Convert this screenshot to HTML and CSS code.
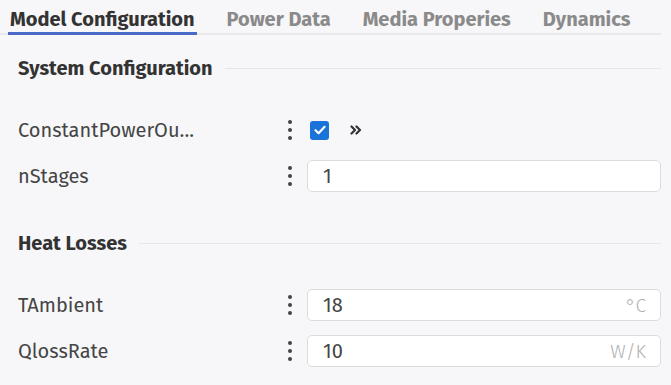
FILE: index.html
```html
<!DOCTYPE html>
<html lang="en">
<head>
    <meta charset="UTF-8">
    <meta name="viewport" content="width=device-width, initial-scale=1.0">
    <title>Model Configuration</title>
    <link rel="stylesheet" href="styles.css">
</head>
<body>
<nav class="tabs">
    <a class="tab active">Model Configuration</a>
    <a class="tab">Power Data</a>
    <a class="tab">Media Properies</a>
    <a class="tab">Dynamics</a>
</nav>

<section class="section">
    <h3 class="section-title">System Configuration</h3>
    <div class="rows">
        <div class="row">
            <span class="label">ConstantPowerOu...</span>
            <span class="dots"><i></i><i></i><i></i></span>
            <div class="control">
                <span class="checkbox">
                    <svg width="14" height="14" viewBox="0 0 14 14"><path d="M2.5 7.2 L5.6 10.2 L11.6 3.8" fill="none" stroke="#fff" stroke-width="2.2" stroke-linecap="round" stroke-linejoin="round"/></svg>
                </span>
                <svg class="chevrons" width="12" height="10" viewBox="0 0 12 10"><path d="M1.5 1.5 L5 5 L1.5 8.5 M6.5 1.5 L10 5 L6.5 8.5" fill="none" stroke="#333" stroke-width="2.2" stroke-linecap="round" stroke-linejoin="round"/></svg>
            </div>
        </div>
        <div class="row">
            <span class="label">nStages</span>
            <span class="dots"><i></i><i></i><i></i></span>
            <div class="control">
                <div class="field"><span class="value">1</span></div>
            </div>
        </div>
    </div>
</section>

<section class="section">
    <h3 class="section-title">Heat Losses</h3>
    <div class="rows">
        <div class="row">
            <span class="label">TAmbient</span>
            <span class="dots"><i></i><i></i><i></i></span>
            <div class="control">
                <div class="field"><span class="value">18</span><span class="unit">°C</span></div>
            </div>
        </div>
        <div class="row">
            <span class="label">QlossRate</span>
            <span class="dots"><i></i><i></i><i></i></span>
            <div class="control">
                <div class="field"><span class="value">10</span><span class="unit">W/K</span></div>
            </div>
        </div>
    </div>
</section>
</body>
</html>
```

FILE: styles.css
```css
body {
    font-family: "Fira Sans", "Open Sans", sans-serif;
    background-color: #f7f7f9;
    color: #444;
    margin: 0;
    padding: 0;
}

.tabs {
    display: flex;
    gap: 28px;
    height: 33px;
    margin-right: 10px;
    padding-left: 8px;
    border-bottom: 2px solid #e9e9eb;
}

.tab {
    position: relative;
    padding: 0 2px;
    font-size: 20px;
    font-weight: bold;
    line-height: 38px;
    height: 33px;
    color: #8a8a8a;
    white-space: nowrap;
}

.tab.active {
    color: #333;
}

.tab.active::after {
    content: "";
    position: absolute;
    left: 0;
    right: 0;
    bottom: -2px;
    height: 3px;
    background-color: #4a69c9;
}

.section {
    padding: 21px 10px 18px 18px;
}

.section-title {
    display: flex;
    align-items: center;
    gap: 12px;
    margin: 0 0 34px 0;
    height: 24px;
    font-size: 20px;
    font-weight: bold;
    color: #333;
}

.section-title::after {
    content: "";
    flex: 1;
    height: 1px;
    background-color: #e6e6e8;
}

.rows {
    display: flex;
    flex-direction: column;
    gap: 14px;
}

.row {
    display: grid;
    grid-template-columns: 262px 20px 1fr;
    align-items: center;
    height: 32px;
}

.label {
    font-size: 20px;
    color: #454545;
    white-space: nowrap;
}

.dots {
    display: flex;
    flex-direction: column;
    align-items: center;
    gap: 3.5px;
}

.dots i {
    display: block;
    width: 4.5px;
    height: 4.5px;
    border-radius: 50%;
    background-color: #444;
}

.control {
    display: flex;
    align-items: center;
    margin-left: 7px;
    height: 32px;
}

.checkbox {
    display: flex;
    align-items: center;
    justify-content: center;
    width: 19px;
    height: 19px;
    margin-left: 3px;
    border-radius: 3px;
    background-color: #1a73d9;
}

.chevrons {
    margin-left: 21px;
}

.field {
    display: flex;
    align-items: center;
    justify-content: space-between;
    flex: 1;
    height: 30px;
    padding: 0 14px 0 15px;
    background-color: #fff;
    border: 1px solid #dcdcdc;
    border-radius: 5px;
}

.value {
    font-size: 20px;
    color: #454545;
}

.unit {
    font-size: 19px;
    font-weight: 300;
    color: #b0b0b0;
}
```
